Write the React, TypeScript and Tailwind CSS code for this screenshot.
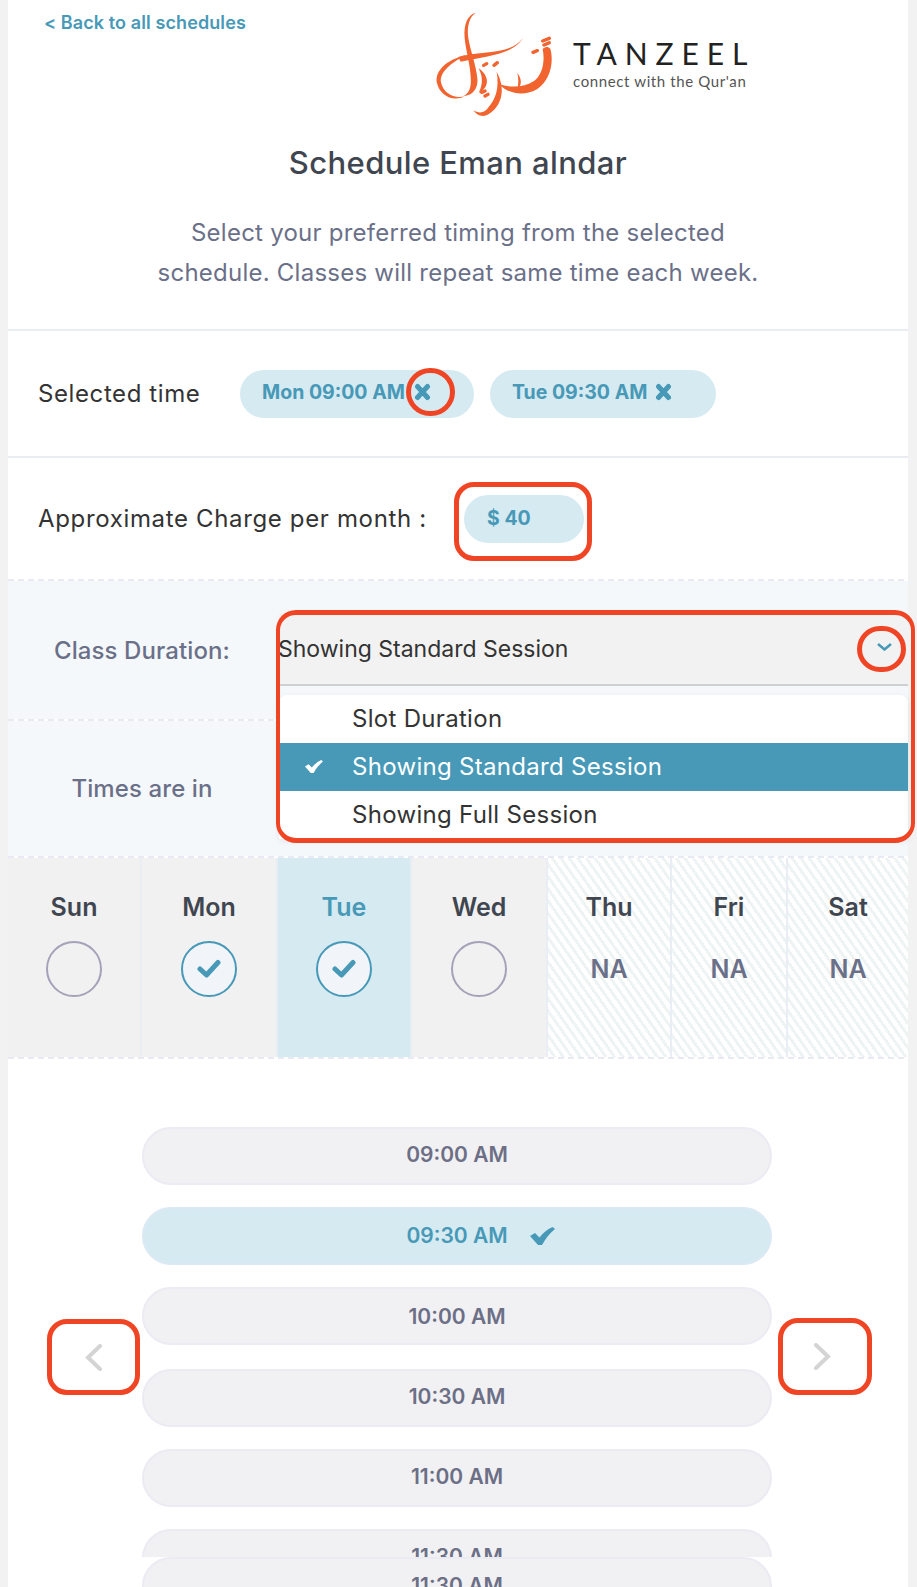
const font = "font-['Inter','Liberation_Sans',sans-serif]";

const DashLine = () => (
  <div className="h-[2px] w-full bg-[repeating-linear-gradient(90deg,#e8e9f3_0,#e8e9f3_6px,transparent_6px,transparent_10px)]" />
);

const TaperCheck = ({ className }: { className: string }) => (
  <svg viewBox="0 0 25 18" className={className} fill="currentColor">
    <path d="M0 9 L5 6 L9.5 10.5 C13 6 17 2.5 22.5 0 L25 2 C19.5 6.5 15.5 11.5 12 18 L8 18 Z" />
  </svg>
);

const RoundCheck = () => (
  <svg viewBox="0 0 24 20" className="w-[24px] h-[20px]" fill="none" stroke="#4799b7" strokeWidth="5" strokeLinecap="round" strokeLinejoin="round">
    <path d="M3 10 L9.5 16 L21 3.5" />
  </svg>
);

const BoldX = ({ className }: { className: string }) => (
  <svg viewBox="0 0 17 18" className={className} fill="none" stroke="currentColor" strokeWidth="5" strokeLinecap="round">
    <path d="M3.5 3.5 L13.5 14.5 M13.5 3.5 L3.5 14.5" />
  </svg>
);

const Logo = () => (
  <div className="flex items-start">
    <svg viewBox="0 0 390 345" className="w-[130px] h-[115px] shrink-0" fill="#f1642f">
      <path d="M137 24 C115 28 100 55 104 100 C108 140 120 175 122 215 C125 245 118 265 100 273 C126 274 146 250 142 220 C138 180 122 140 115 100 C110 65 118 35 137 24 Z" />
      <path d="M105 274 C68 292 30 272 21 235 C13 200 45 165 110 149 C65 172 28 200 33 232 C40 265 72 282 105 274 Z" />
      <path d="M85 156 C150 136 240 152 278 100 C250 150 160 154 92 170 Z" />
      <path d="M338 132 C348 124 358 124 362 134 C372 178 358 228 322 252 C288 272 240 272 206 236 C240 250 283 247 312 228 C336 210 346 172 338 132 Z" />
      <path d="M200 200 C226 248 218 294 184 322 C166 337 145 338 130 316 C150 328 166 322 176 306 C198 280 208 248 200 200 Z" />
      <path d="M146 190 C176 210 182 246 146 264 C158 240 160 218 146 190 Z" />
      <path d="M262 204 C276 222 276 240 262 254 C266 236 266 222 262 204 Z" />
      <g fill="none" stroke="#f1642f" strokeWidth="10" strokeLinecap="round">
        <path d="M161 181 L170 176 M192 181 L202 173 M155 262 L165 258 M165 273 L174 268 M309 142 L322 137 M338 108 L358 100 M342 120 L358 113" />
      </g>
    </svg>
    <div className="mt-[31px] ml-[13px] flex flex-col font-['Lato',sans-serif]">
      <span className="text-[30px] leading-[34px] tracking-[7.9px] text-[#222222]">TANZEEL</span>
      <span className="mt-[2px] text-[15px] leading-[18px] tracking-[0.62px] text-[#555555] whitespace-nowrap">connect with the Qur'an</span>
    </div>
  </div>
);

const days = [
  { name: "Sun", w: "w-[134px]", state: "off" },
  { name: "Mon", w: "w-[136px]", state: "on" },
  { name: "Tue", w: "w-[134px]", state: "active" },
  { name: "Wed", w: "w-[136px]", state: "off" },
  { name: "Thu", w: "w-[124px]", state: "na" },
  { name: "Fri", w: "w-[116px]", state: "na" },
  { name: "Sat", w: "w-[120px]", state: "na" },
];

const DayCell = ({ name, w, state }: { name: string; w: string; state: string }) => {
  const bg =
    state === "active"
      ? "bg-[#d6eaf1]"
      : state === "na"
        ? "bg-[repeating-linear-gradient(55deg,#ffffff_0,#ffffff_4px,#eef4f3_4px,#eef4f3_7px)]"
        : "bg-[#f1f1f1]";
  return (
    <div className={`${w} ${bg} flex flex-col items-center pt-[35px] border-r-2 border-[#e9edf4] last:border-r-0`}>
      <span className={`text-[25px] leading-[28px] font-semibold ${state === "active" ? "text-[#4799b7]" : "text-[#3f4650]"}`}>{name}</span>
      {state === "na" ? (
        <span className="mt-[34px] text-[25px] leading-[28px] font-semibold text-[#6b7089]">NA</span>
      ) : state === "off" ? (
        <div className="mt-[20px] -ml-px w-14 h-14 rounded-full border-2 border-[#a3a2b8]" />
      ) : (
        <div className="mt-[20px] -ml-px w-14 h-14 rounded-full border-2 border-[#4799b7] bg-[#f1f5fa] flex items-center justify-center">
          <RoundCheck />
        </div>
      )}
    </div>
  );
};

const TimePill = ({ label, selected, extra }: { label: string; selected?: boolean; extra?: string }) => (
  <div
    className={`w-[630px] h-[58px] shrink-0 rounded-[29px] border-2 flex items-center justify-center text-[21px] font-semibold ${
      selected ? "bg-[#d6eaf1] border-[#dbe9f4] text-[#4799b7]" : "bg-[#f1f1f3] border-[#ebebf3] text-[#6c6f85]"
    } ${extra ?? "pb-[2px]"}`}
  >
    <span>{label}</span>
    {selected && <TaperCheck className="w-[25px] h-[18px] ml-[22px] -mr-[47px]" />}
  </div>
);

export default function App() {
  return (
    <div className={`h-[1587px] w-[917px] overflow-hidden bg-[#f2f2f2] ${font}`}>
      <div className="ml-2 w-[900px] h-full bg-white">
        <header className="h-[331px] border-b-2 border-[#e9edf2] flex flex-col items-center relative">
          <a className="self-start ml-[36px] mt-[11px] text-[18px] leading-[24px] font-semibold tracking-[0.1px] text-[#4799b7]">&lt; Back to all schedules</a>
          <div className="self-start ml-[422px] -mt-[30px]">
            <Logo />
          </div>
          <h1 className="mt-[25px] text-[31px] leading-[36px] font-medium tracking-[0.4px] text-[#3f4650]">Schedule Eman alndar</h1>
          <p className="mt-[32px] text-center text-[24px] leading-[40px] tracking-[0.24px] text-[#6b7089]">
            Select your preferred timing from the selected
            <br />
            schedule. Classes will repeat same time each week.
          </p>
        </header>

        <section className="h-[127px] border-b-2 border-[#e9edf2] flex items-center pl-[30px]">
          <span className="w-[202px] text-[24px] tracking-[0.6px] text-[#333333]">Selected time</span>
          <div className="relative w-[234px] h-[48px] rounded-[24px] bg-[#d6eaf1] flex items-center pl-[22px] pb-[2px] text-[19.5px] font-bold text-[#4799b7]">
            <span>Mon 09:00 AM</span>
            <BoldX className="absolute left-[174px] top-[13px] w-[17px] h-[18px]" />
            <div className="absolute left-[166px] -top-[2px] w-[49px] h-[48px] rounded-full border-[5px] border-[#f04525]" />
          </div>
          <div className="relative ml-[16px] w-[226px] h-[48px] rounded-[24px] bg-[#d6eaf1] flex items-center pl-[22px] pb-[2px] text-[19.5px] font-bold text-[#4799b7]">
            <span>Tue 09:30 AM</span>
            <BoldX className="absolute left-[165px] top-[13px] w-[17px] h-[18px]" />
          </div>
        </section>

        <section className="h-[121px] flex items-center pl-[30px]">
          <span className="w-[426px] text-[24px] tracking-[0.65px] text-[#333333]">Approximate Charge per month :</span>
          <div className="relative w-[120px] h-[48px] rounded-[24px] bg-[#d6eaf1] flex items-center pl-[23px] text-[19.5px] font-bold text-[#4799b7]">
            <span>$ 40</span>
            <div className="absolute -left-[10px] -top-[13px] w-[138px] h-[79px] rounded-[20px] border-[5px] border-[#f04525]" />
          </div>
        </section>

        <DashLine />
        <section className="relative h-[138px] bg-[#f5f8fb] flex items-center">
          <span className="w-[268px] pt-[2px] text-center text-[24px] tracking-[0.1px] font-medium text-[#6b7089]">Class Duration:</span>
          <div className="relative ml-[3px] flex-1 h-[72px] bg-[#f2f2f2] border-b-2 border-[#d0d0d0] flex items-center justify-between pr-[16px]">
            <span className="-ml-px text-[23px] text-[#333333]">Showing Standard Session</span>
            <svg viewBox="0 0 15 8" className="w-[15px] h-[8px] mb-[4px]" fill="none" stroke="#4799b7" strokeWidth="2.5">
              <path d="M1 1 L7.5 6.5 L14 1" />
            </svg>
            <div className="absolute left-[578px] top-[12px] w-[49px] h-[46px] rounded-full border-[5px] border-[#f04525]" />
          </div>
          <div className="absolute z-10 left-[271px] right-0 top-[114px] rounded-t-[8px] bg-white text-[24px] tracking-[0.3px] text-[#333333] shadow-[0_2px_6px_rgba(0,0,0,0.08)]">
            <div className="h-[48px] flex items-center pl-[73px]">Slot Duration</div>
            <div className="relative h-[48px] flex items-center pl-[73px] bg-[#4799b7] text-white">
              <TaperCheck className="absolute left-[26px] top-[17px] w-[18px] h-[13px]" />
              Showing Standard Session
            </div>
            <div className="h-[48px] flex items-center pl-[73px]">Showing Full Session</div>
          </div>
          <div className="absolute z-20 left-[268px] top-[29px] w-[639px] h-[233px] rounded-[20px] border-x-4 border-y-[5px] border-[#f04525]" />
        </section>
        <DashLine />
        <section className="h-[135px] bg-[#f5f8fb] flex items-center">
          <span className="w-[268px] text-center text-[24px] tracking-[0.1px] font-medium text-[#6b7089]">Times are in</span>
        </section>
        <DashLine />

        <section className="flex h-[199px]">
          {days.map((d) => (
            <DayCell key={d.name} {...d} />
          ))}
        </section>
        <DashLine />

        <div className="relative h-[498px] overflow-hidden pt-[68px] pl-[134px] flex flex-col gap-[22px]">
          <TimePill label="09:00 AM" />
          <TimePill label="09:30 AM" selected extra="pb-0" />
          <TimePill label="10:00 AM" extra="pt-[2px]" />
          <TimePill label="10:30 AM" extra="mt-[2px] pb-[2px]" />
          <TimePill label="11:00 AM" />
          <TimePill label="11:30 AM" />
          <button className="absolute left-[39px] top-[260px] w-[93px] h-[76px] rounded-[20px] border-[5px] border-[#f04525] flex items-center justify-center">
            <svg viewBox="0 0 17 27" className="w-[17px] h-[27px]" fill="none" stroke="#d4d4d4" strokeWidth="4" strokeLinecap="round">
              <path d="M15 2 L3 13.5 L15 25" />
            </svg>
          </button>
          <button className="absolute left-[770px] top-[259px] w-[94px] h-[77px] rounded-[20px] border-[5px] border-[#f04525] flex items-center justify-center pr-[6px]">
            <svg viewBox="0 0 17 27" className="w-[17px] h-[27px]" fill="none" stroke="#d4d4d4" strokeWidth="4" strokeLinecap="round">
              <path d="M2 2 L14 13.5 L2 25" />
            </svg>
          </button>
        </div>
        <div className="pl-[134px]">
          <TimePill label="11:30 AM" extra="pb-0" />
        </div>
      </div>
    </div>
  );
}
